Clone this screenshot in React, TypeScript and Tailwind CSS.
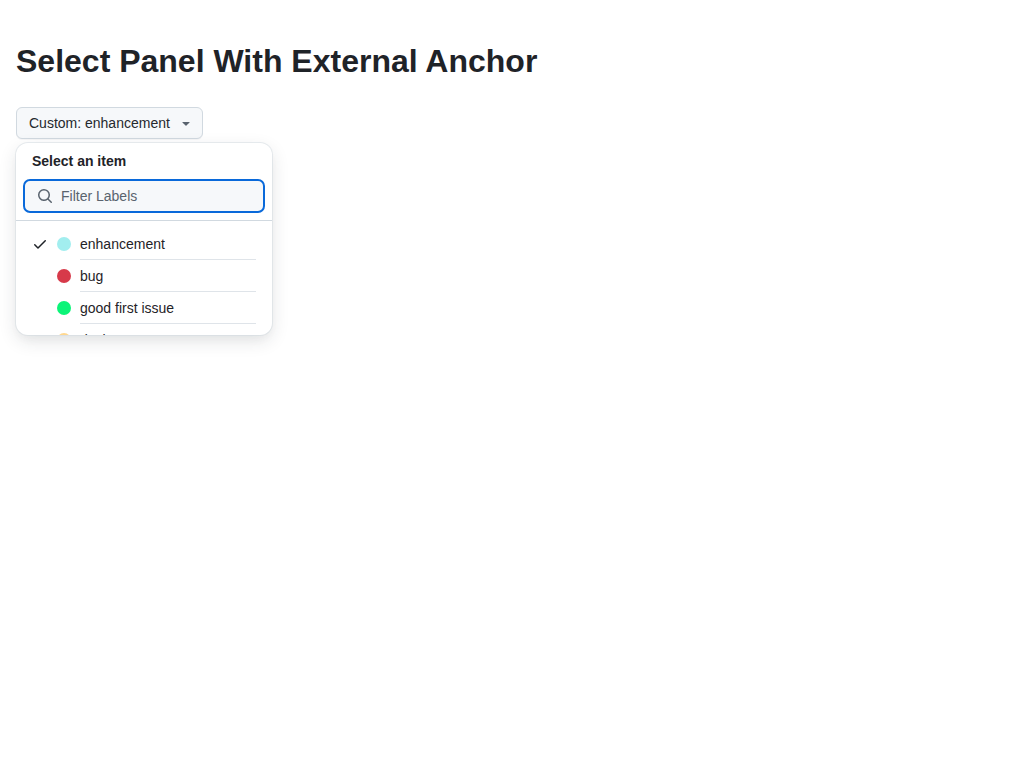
import { useState } from "react";

type Label = { name: string; dot: string };

const labels: Label[] = [
  { name: "enhancement", dot: "bg-[#a2eeef]" },
  { name: "bug", dot: "bg-[#d73a4a]" },
  { name: "good first issue", dot: "bg-[#0cf478]" },
  { name: "design", dot: "bg-[#ffd78e]" },
  { name: "blocker", dot: "bg-[#ff0000]" },
  { name: "backend", dot: "bg-[#a4f287]" },
  { name: "frontend", dot: "bg-[#8dc6fc]" },
];

function Octicon({ d, className = "" }: { d: string; className?: string }) {
  return (
    <svg aria-hidden="true" viewBox="0 0 16 16" className={`size-4 shrink-0 fill-current ${className}`}>
      <path d={d} />
    </svg>
  );
}

const CHECK =
  "M13.78 4.22a.75.75 0 0 1 0 1.06l-7.25 7.25a.75.75 0 0 1-1.06 0L2.22 9.28a.751.751 0 0 1 .018-1.042.751.751 0 0 1 1.042-.018L6 10.94l6.72-6.72a.75.75 0 0 1 1.06 0Z";
const SEARCH =
  "M10.68 11.74a6 6 0 0 1-7.922-8.982 6 6 0 0 1 8.982 7.922l3.04 3.04a.749.749 0 0 1-.326 1.275.749.749 0 0 1-.734-.215ZM11.5 7a4.499 4.499 0 1 0-8.997 0A4.499 4.499 0 0 0 11.5 7Z";
const TRIANGLE_DOWN =
  "m4.427 7.427 3.396 3.396a.25.25 0 0 0 .354 0l3.396-3.396A.25.25 0 0 0 11.396 7H4.604a.25.25 0 0 0-.177.427Z";

export default function App() {
  const [selected, setSelected] = useState("enhancement");
  const [filter, setFilter] = useState("");
  const [open, setOpen] = useState(true);
  const visible = labels.filter((l) => l.name.startsWith(filter.toLowerCase()));

  return (
    <main className="min-h-screen p-4 font-['Liberation_Sans',Arial,sans-serif] text-sm leading-5 text-[#1f2328]">
      <h1 className="mt-[21px] mb-[22px] text-[32px] leading-[48px] font-bold">
        Select Panel With External Anchor
      </h1>
      <div className="relative w-fit">
        <button
          type="button"
          aria-haspopup="true"
          aria-expanded={open}
          onClick={() => setOpen(!open)}
          className="flex h-8 items-center gap-2 rounded-md border border-[#d1d9e0] bg-[#f6f8fa] pr-2 pl-3 font-medium text-[#25292e] shadow-[0_1px_0_0_#1f23280a]"
        >
          Custom: {selected}
          <Octicon d={TRIANGLE_DOWN} className="text-[#59636e]" />
        </button>

        {open && (
          <section
            aria-labelledby="panel-title"
            className="absolute top-full left-0 mt-1 flex h-48 w-64 flex-col overflow-hidden rounded-xl bg-white shadow-[0_0_0_1px_#d1d9e080,0_6px_12px_-3px_#25292e0a,0_6px_18px_0_#25292e1f]"
          >
            <h2 id="panel-title" className="px-4 pt-2 font-semibold">
              Select an item
            </h2>
            <div className="border-b border-[#d1d9e0] px-2 pt-[9px] pb-2">
              <label className="flex h-8 items-center gap-2 rounded-md bg-[#f6f8fa] px-[13px] outline-2 -outline-offset-1 outline-[#0969da]">
                <Octicon d={SEARCH} className="text-[#59636e]" />
                <input
                  type="text"
                  aria-label="Filter Labels"
                  placeholder="Filter Labels"
                  value={filter}
                  onChange={(e) => setFilter(e.target.value)}
                  className="min-w-0 flex-1 bg-transparent outline-none placeholder:text-[#59636e]"
                />
              </label>
            </div>
            <ul role="listbox" aria-label="Labels" className="min-h-0 flex-1 overflow-y-auto px-2 pt-[7px] pb-2 [scrollbar-width:none]">
              {visible.map((l) => (
                <li key={l.name} role="option" aria-selected={l.name === selected}>
                  <button
                    type="button"
                    onClick={() => setSelected(l.name)}
                    className="flex h-8 w-full items-center gap-2 px-2 text-left"
                  >
                    <Octicon d={CHECK} className={l.name === selected ? "" : "invisible"} />
                    <span className="flex size-4 items-center justify-center">
                      <span className={`size-3.5 rounded-full ${l.dot}`} />
                    </span>
                    <span className="flex h-8 flex-1 items-center border-b border-[#d1d9e0b3] pt-px">{l.name}</span>
                  </button>
                </li>
              ))}
            </ul>
          </section>
        )}
      </div>
    </main>
  );
}
